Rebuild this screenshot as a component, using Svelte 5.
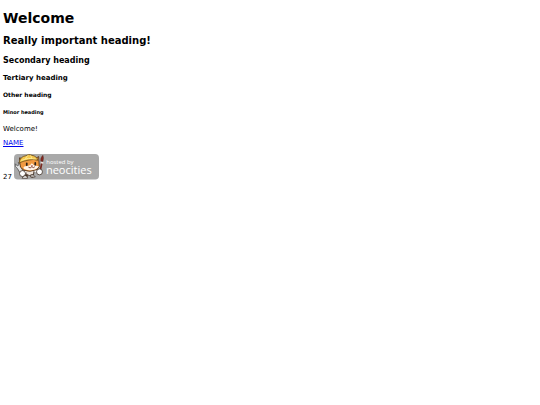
<script lang="ts">
    const visitors = 27;
</script>

<svelte:head>
    <title>Welcome</title>
</svelte:head>

<main>
    <h1>Welcome</h1>
    <h2>Really important heading!</h2>
    <h3>Secondary heading</h3>
    <h4>Tertiary heading</h4>
    <h5>Other heading</h5>
    <h6>Minor heading</h6>
    <p>Welcome!</p>
    <p><a href="#name">NAME</a></p>

    <footer>
        <span>{visitors}</span>
        <a class="badge" href="#neocities" aria-label="hosted by neocities">
            <svg viewBox="0 0 200 60">
                <rect width="200" height="60" rx="9" fill="#a9a9a9" />

                <!-- wrench -->
                <path d="M15 46 L8 34 Q1 31 3 23 L8 28 L12 25 L10 20 Q17 21 16 29 L22 42 Z" fill="#e4e4e4" stroke="#555" stroke-width="2" />
                <!-- body and legs -->
                <path d="M26 36 L20 45 M47 34 L58 42 M32 42 L28 53 M43 40 L43 52" stroke="#4a3626" stroke-width="8" stroke-linecap="round" />
                <path d="M28 34 H48 L46 48 Q35 54 28 47 Z" fill="#eee5dc" stroke="#3b2b20" stroke-width="2" />
                <path d="M29 39 L24 45 M46 37 L53 41" stroke="#fff" stroke-width="5" stroke-linecap="round" />
                <!-- head -->
                <path d="M14 22 L13 9 L24 12 Q38 6 50 11 L58 6 L59 21 Q63 31 53 37 Q37 44 23 38 Q12 32 14 22 Z" fill="#f09a42" stroke="#49301f" stroke-width="2" />
                <path d="M42 22 Q38 29 26 29 Q20 31 24 35 Q37 41 52 35 Q58 32 58 28 Q47 30 42 22" fill="#fff4e8" />
                <path d="M30 22 v4 M50 21 v4" stroke="#2c211b" stroke-width="4" stroke-linecap="round" />
                <path d="M39 27 h6 l-3 3 Z" fill="#a13c2a" />
                <path d="M42 30 q-4 5 -8 1 M42 30 q4 4 7 0" fill="none" stroke="#6b2d20" stroke-width="2" />
                <!-- hard hat -->
                <path d="M12 21 Q14 6 28 4 Q35 -1 42 3 Q54 5 56 15 Q47 11 36 14 Q23 16 12 21 Z" fill="#f5c64b" stroke="#73511d" stroke-width="2" />
                <path d="M27 12 Q28 6 34 3 M41 11 Q42 6 38 3 M17 15 Q33 7 51 12" fill="none" stroke="#fff09b" stroke-width="2" />
                <!-- paintbrush -->
                <path d="M61 43 L65 23" stroke="#7a2b22" stroke-width="4" stroke-linecap="round" />
                <path d="M63 17 L63 11 Q64 7 68 3 Q71 10 68 18 Z" fill="#86281f" stroke="#4b1e1b" stroke-width="1" />
                <path d="M63 20 L69 21" stroke="#e8e0dc" stroke-width="4" />
                <!-- paws -->
                <circle cx="20" cy="46" r="7" fill="#fff" stroke="#493c33" stroke-width="2" />
                <circle cx="60" cy="42" r="7" fill="#fff" stroke="#493c33" stroke-width="2" />
                <path d="M23 52 Q30 49 32 57 H19 Z M40 49 Q48 48 50 54 H39 Z" fill="#fff" stroke="#493c33" stroke-width="2" />

                <text x="76" y="23" font-size="14">hosted by</text>
                <text x="75" y="47" font-size="26">neocities</text>
            </svg>
        </a>
    </footer>
</main>

<style>
    :global(body) {
        background: #fff;
    }
    main {
        padding: 10px 3px;
        color: #000;
        font-family: Verdana, "DejaVu Sans", sans-serif;
        font-size: 7px;
        line-height: 8px;
    }
    h1, h2, h3, h4, h5, h6, p {
        margin: 0;
    }
    h1 {
        margin-bottom: 9px;
        font-size: 14px;
        line-height: 16px;
    }
    h2 {
        margin-bottom: 9px;
        font-size: 10px;
        line-height: 12px;
    }
    h3 {
        margin-bottom: 9px;
        font-size: 8px;
        line-height: 9px;
    }
    h4 {
        margin-bottom: 9px;
        font-size: 7px;
    }
    h5 {
        margin-bottom: 9px;
        font-size: 6px;
    }
    h6 {
        margin-bottom: 9px;
        font-size: 5px;
    }
    p {
        margin-bottom: 6px;
    }
    a {
        color: #0000ee;
    }
    footer {
        display: flex;
        align-items: flex-end;
        gap: 2px;
        margin-top: 7px;
        line-height: 6px;
    }
    .badge {
        width: 85px;
    }
    svg {
        display: block;
        width: 100%;
    }
    text {
        fill: #fff;
        font-family: "Open Sans", "Noto Sans", sans-serif;
    }
</style>
